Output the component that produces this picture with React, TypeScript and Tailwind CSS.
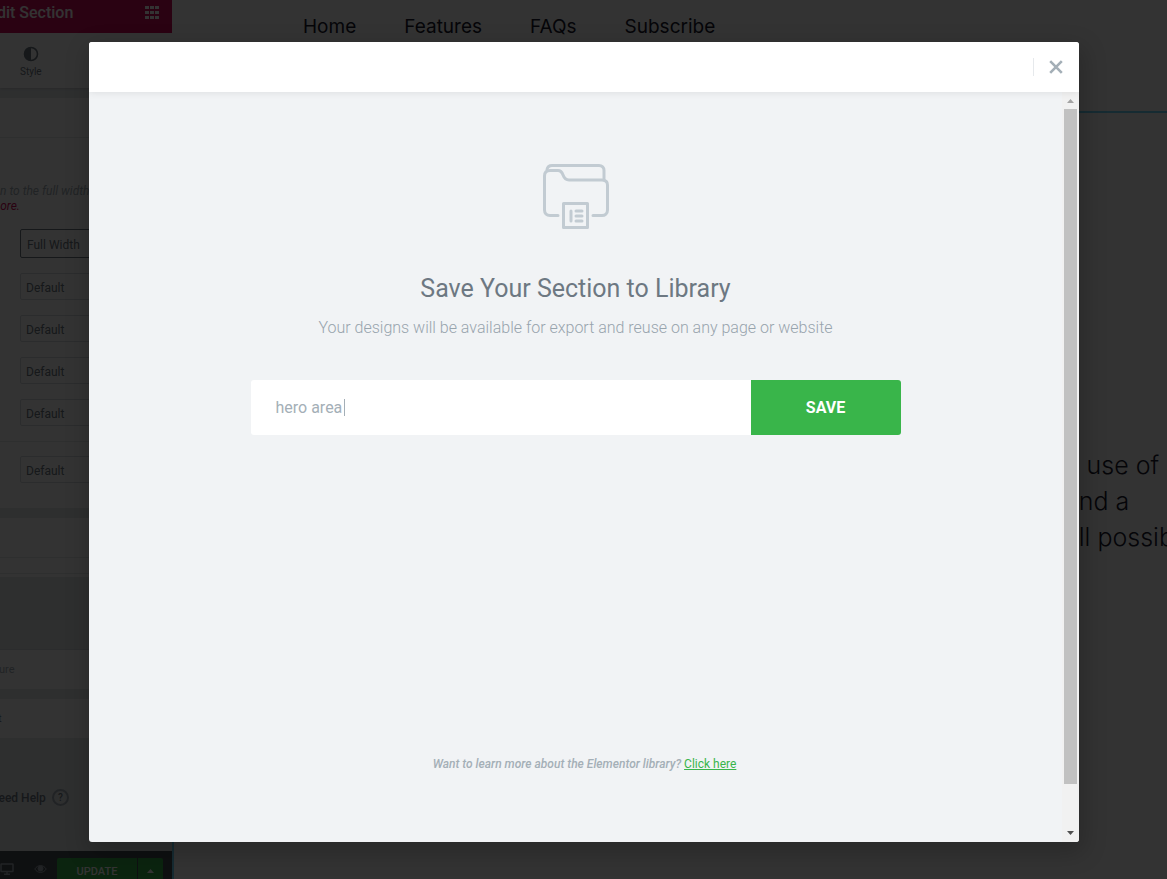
import { useState } from 'react';

const navLinks = ['Home', 'Features', 'FAQs', 'Subscribe'];
const layoutControls = ['Height', 'Column Position', 'Content Position', 'Overflow'];

const GridIcon = () => (
  <svg width="14" height="13" viewBox="0 0 14 13" fill="currentColor">
    {[0, 5, 10].map((y) =>
      [0, 5, 10].map((x) => <rect key={`${x}-${y}`} x={x} y={y} width="4" height="3" />)
    )}
  </svg>
);

const ContrastIcon = () => (
  <svg width="16" height="16" viewBox="0 0 16 16">
    <circle cx="8" cy="8" r="6.5" fill="none" stroke="currentColor" strokeWidth="1.6" />
    <path d="M8 1.5a6.5 6.5 0 0 0 0 13z" fill="currentColor" />
  </svg>
);

const LibraryIcon = () => (
  <svg
    width="68"
    height="68"
    viewBox="0 0 68 68"
    fill="none"
    stroke="#c2cbd2"
    strokeWidth="3"
    strokeLinecap="round"
    strokeLinejoin="round"
  >
    <path d="M5 6.500C5.500 4 7.500 2.500 10 2.500H57C60 2.500 62 4.500 62 7.500V17" />
    <path d="M16 52.500H8C4.500 52.500 2.500 50 2.500 47V13C2.500 9.500 4.500 7.500 8 7.500H16C23 7.500 19 17 27 17H60C63.500 17 65.500 19 65.500 22V47C65.500 50.500 63 52.500 60 52.500H51" />
    <rect x="21.500" y="40.500" width="24" height="24" />
    <path d="M29 48V58M34 48H40M34 53H40M34 58H40" />
  </svg>
);

const CloseIcon = () => (
  <svg width="14" height="14" viewBox="0 0 14 14" fill="none" stroke="currentColor" strokeWidth="2.600">
    <path d="M1.200 1.200L12.800 12.800M12.800 1.200L1.200 12.800" />
  </svg>
);

const MonitorIcon = () => (
  <svg width="14" height="12" viewBox="0 0 14 12" fill="none" stroke="currentColor" strokeWidth="1.500">
    <rect x="1" y="1" width="12" height="7.500" rx="0.500" />
    <path d="M4 11.200H10M7 8.500V11" />
  </svg>
);

const EyeIcon = () => (
  <svg width="13" height="10" viewBox="0 0 13 10" fill="none" stroke="currentColor">
    <path d="M0.800 5C3.500 0.500 9.500 0.500 12.200 5C9.500 9.500 3.500 9.500 0.800 5Z" />
    <circle cx="6.500" cy="4.500" r="2.500" fill="currentColor" />
  </svg>
);

interface PanelSelectProps {
  label: string;
  value: string;
  active?: boolean;
}

const PanelSelect: React.FC<PanelSelectProps> = ({ label, value, active }) => (
  <select
    aria-label={label}
    className={
      active
        ? 'block h-[29px] w-full appearance-none rounded-xs border border-[#6d7882] pt-[2px] pl-[6px] text-xs text-[#6d7882]'
        : 'block h-[27px] w-full appearance-none rounded-xs border border-[#d5dadf] pt-[2px] pl-[5px] text-xs text-[#6d7882]'
    }
  >
    <option>{value}</option>
  </select>
);

const EditorPanel = () => (
  <aside className="flex w-[172px] shrink-0 flex-col overflow-hidden bg-[#e6e9ec] shadow-md">
    <header className="flex h-[33px] shrink-0 items-start justify-between bg-[#d30c5c] pr-[13px] text-white">
      <h1 className="-ml-3 pt-px text-base font-medium">Edit Section</h1>
      <button className="pt-[6px]" aria-label="Widgets">
        <GridIcon />
      </button>
    </header>

    <div className="h-[55px] shrink-0 bg-white pl-5 shadow-sm">
      <button className="flex flex-col items-center pt-[13px] text-[#6d7882]">
        <ContrastIcon />
        <span className="pt-[2px] text-[10px] leading-4">Style</span>
      </button>
    </div>

    <div className="mt-[10px] h-[410px] shrink-0 bg-white">
      <div className="h-10 border-b border-[#e6e9ec]" />
      <p className="h-[91px] pt-[46px] text-xs leading-[15px] whitespace-nowrap text-[#a4afb7] italic">
        n to the full width
        <br />
        <a href="#more" className="-ml-[10px] text-[#d30c5c]">
          more.
        </a>
      </p>
      <div className="space-y-[15px] pr-3 pl-5">
        <PanelSelect label="Content Width" value="Full Width" active />
        {layoutControls.map((label) => (
          <PanelSelect key={label} label={label} value="Default" />
        ))}
      </div>
      <div className="mt-[15px] border-t border-[#e6e9ec] pt-[14px] pr-3 pl-5">
        <PanelSelect label="HTML Tag" value="Default" />
      </div>
    </div>

    <div className="mt-[10px] h-[59px] shrink-0 bg-white">
      <div className="h-10 border-b border-[#e6e9ec]" />
      <div className="h-4 border-b border-[#e6e9ec]" />
    </div>
    <div className="mt-[72px] h-10 shrink-0 border-t border-[#d5dadf] bg-white pt-3 text-[11px] leading-4 text-[#a4afb7]">
      <span className="-ml-px">ure</span>
    </div>
    <div className="mt-[10px] h-[39px] shrink-0 bg-white pt-3 text-[11px] leading-4 text-[#6d7882]">
      <span className="-ml-[2px]">t</span>
    </div>

    <button className="mt-[51px] -ml-[10px] flex shrink-0 items-center gap-[6px] text-xs font-medium text-[#6d7882]">
      Need Help
      <span className="flex size-[17px] items-center justify-center rounded-full border-2 border-[#a4afb7] text-[10px]">
        ?
      </span>
    </button>

    <footer className="mt-auto flex h-7 shrink-0 items-center bg-[#495157] pt-[7px] pr-[9px] text-[#a4afb7]">
      <MonitorIcon />
      <span className="ml-5 flex-1">
        <EyeIcon />
      </span>
      <button className="h-full w-20 rounded-tl-xs bg-[#39b54a] pt-[6px] text-[11px] font-medium text-white">
        UPDATE
      </button>
      <button
        aria-label="Save options"
        className="ml-px flex h-full w-[25px] items-center justify-center rounded-tr-xs bg-[#39b54a] pt-1"
      >
        <svg width="7" height="4" viewBox="0 0 7 4" fill="white">
          <path d="M0 4L3.500 0L7 4Z" />
        </svg>
      </button>
    </footer>
  </aside>
);

const Preview = () => (
  <main className="flex min-w-0 flex-1 flex-col overflow-hidden bg-white font-['Inter',sans-serif] text-[#1a1a2e]">
    <nav className="flex h-[111px] shrink-0 gap-12 pt-[13px] pl-[131px] text-[19px] leading-7">
      {navLinks.map((link) => (
        <a key={link} href={`#${link.toLowerCase()}`}>
          {link}
        </a>
      ))}
    </nav>
    <section className="flex flex-1 justify-end border-t-2 border-l-2 border-[#71d7f7] pt-[334px]">
      <p className="w-[102px] shrink-0 text-[25px] leading-9 font-light whitespace-nowrap">
        e use of a
        <br />
        and a
        <br />
        all possible
      </p>
    </section>
  </main>
);

const ScrollRail = () => (
  <div className="flex w-[17px] shrink-0 flex-col items-center bg-[#f1f1f1] py-[7px]">
    <svg width="7" height="4" viewBox="0 0 7 4" fill="#a3a3a3">
      <path d="M0 4L3.500 0L7 4Z" />
    </svg>
    <div className="mt-[6px] mb-[47px] w-[13px] flex-1 bg-[#c1c1c1]" />
    <svg width="7" height="4" viewBox="0 0 7 4" fill="#505050">
      <path d="M0 0L3.500 4L7 0Z" />
    </svg>
  </div>
);

const SaveTemplateModal = () => {
  const [name, setName] = useState('hero area');

  return (
    <div
      role="dialog"
      className="flex h-[800px] w-full max-w-[990px] flex-col overflow-hidden rounded-[3px] bg-[#f1f3f5] shadow-[2px_8px_23px_3px_rgba(0,0,0,0.2)]"
    >
      <div className="z-10 flex h-[50px] shrink-0 items-center justify-end bg-white pr-4 shadow-[0_0_8px_rgba(0,0,0,0.1)]">
        <button aria-label="Close" className="flex h-[18px] items-center border-l border-[#e6e9ec] pl-[15px] text-[#a4afb7]">
          <CloseIcon />
        </button>
      </div>

      <div className="flex min-h-0 flex-1">
        <div className="flex flex-1 flex-col items-center pt-[71px] pb-[70px] text-center">
          <LibraryIcon />
          <h2 className="mt-10 text-[25px] leading-9 text-[#6d7882]">Save Your Section to Library</h2>
          <p className="mt-[9px] text-base font-light text-[#98a4ad]">
            Your designs will be available for export and reuse on any page or website
          </p>
          <form className="mt-10 flex h-[55px] w-full max-w-[650px]" onSubmit={(e) => e.preventDefault()}>
            <div className="relative flex-1">
              <input
                aria-label="Template name"
                value={name}
                onChange={(e) => setName(e.target.value)}
                className="h-full w-full rounded-l-[3px] bg-white px-[25px] text-base text-[#a4afb7] outline-none"
              />
              <span className="absolute top-[19px] left-[93px] h-[17px] w-px bg-[#a4afb7]" />
            </div>
            <button className="w-[150px] rounded-r-[3px] bg-[#39b54a] text-base font-bold text-white">SAVE</button>
          </form>
          <p className="mt-auto pl-[18px] text-xs text-[#a4afb7]">
            <i className="font-medium">Want to learn more about the Elementor library?</i>{' '}
            <a href="#library" className="text-[#39b54a] underline">
              Click here
            </a>
          </p>
        </div>
        <ScrollRail />
      </div>
    </div>
  );
};

export default function App() {
  return (
    <div className="relative flex h-screen overflow-hidden font-['Roboto',sans-serif]">
      <EditorPanel />
      <Preview />
      <div className="absolute inset-0 z-50 flex items-start justify-center bg-black/80 pt-[42px] pl-px">
        <SaveTemplateModal />
      </div>
    </div>
  );
}
